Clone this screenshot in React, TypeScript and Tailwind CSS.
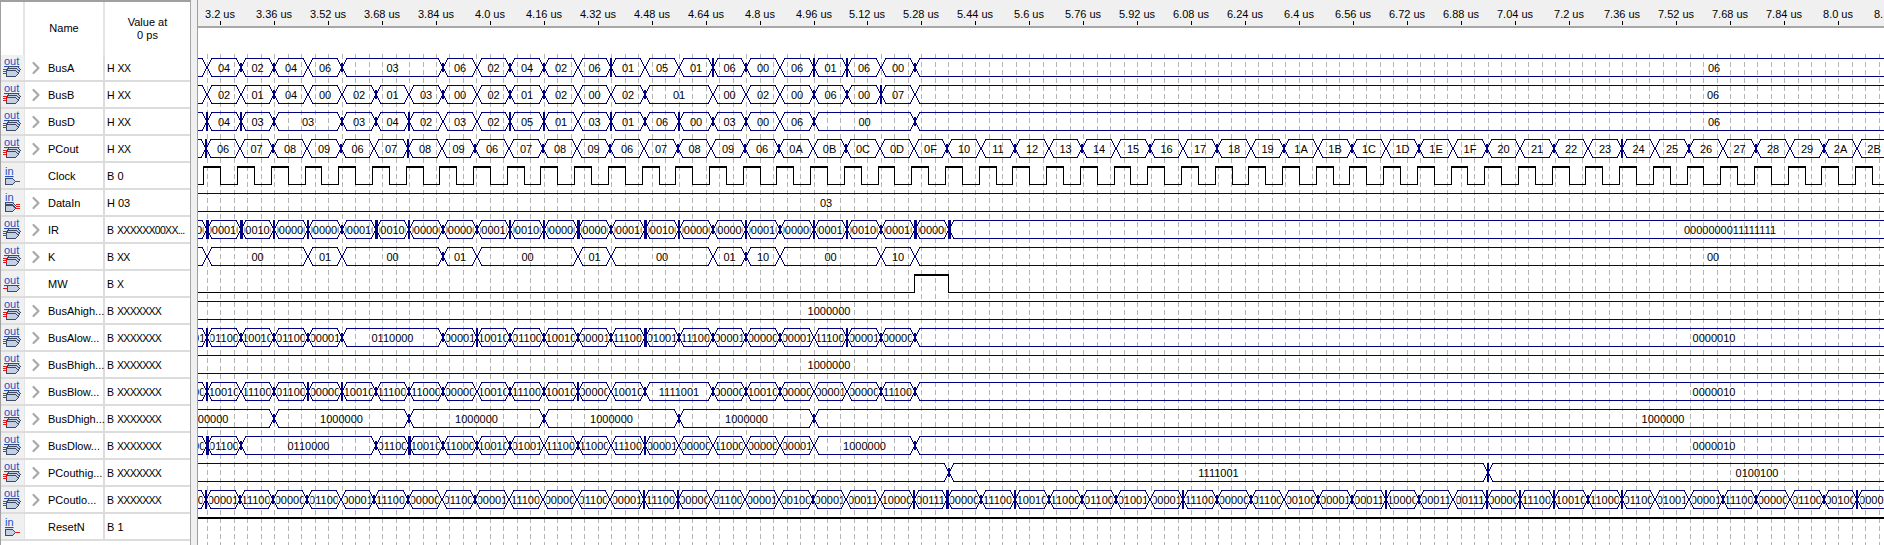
import React from "react";
import { ChevronRight } from "lucide-react";

const FONT = '"Liberation Sans", Arial, sans-serif';
const NAVY = "#000080";

// px per slot and where slot 0 begins (a slot is one clock period, 100 ns)
const SLOT = 33.708;
const SLOT0 = 206.3;
const LAST_SLOT = 60;
const TICK0 = 220.3;
const TICK = 53.93;

const SEVEN: Record<string, string> = {
  "0": "1000000",
  "1": "1111001",
  "2": "0100100",
  "3": "0110000",
  "4": "0011001",
  "5": "0010010",
  "6": "0000010",
  "7": "1111000",
  "8": "0000000",
  "9": "0011000",
  A: "0001000",
  B: "0000011",
  C: "1000110",
  D: "0100001",
  E: "0000110",
  F: "0001110",
};

type Seg = { from: number; to: number; text: string };

// tokens are one per slot, "." carries on the value before it
const parse = (tokens: string, start = -1): Seg[] => {
  const segs: Seg[] = [];
  tokens.split(" ").forEach((t, i) => {
    if (t === ".") return;
    if (segs.length) segs[segs.length - 1].to = start + i;
    segs.push({ from: start + i, to: LAST_SLOT, text: t });
  });
  return segs;
};

// the 7 segment rows follow the low nibble of their bus, equal values merge
const sevenSeg = (tokens: string): Seg[] => {
  const segs: Seg[] = [];
  let value = "";
  tokens.split(" ").forEach((t, i) => {
    const v = t === "." ? value : SEVEN[t[1]];
    value = v;
    const last = segs[segs.length - 1];
    if (last && last.text === v) return;
    if (last) last.to = i - 1;
    segs.push({ from: i - 1, to: LAST_SLOT, text: v });
  });
  return segs;
};

const ir = (s: string) => "000000" + s + "000000";

const BUS_A = "06 04 02 04 06 03 . . 06 02 04 02 06 01 05 01 06 00 06 01 06 00 06";
const BUS_B = "00 02 01 04 00 02 01 03 00 02 01 02 00 02 01 . 00 02 00 06 00 07 06";
const BUS_D = "00 04 03 03 . 03 04 02 03 02 05 01 03 01 06 00 03 00 06 00 . . 06";
const hexCount = Array.from({ length: 29 }, (_, i) => (i + 16).toString(16).toUpperCase()).join(" ");
const PC = "09 06 07 08 09 06 07 08 09 06 07 08 09 06 07 08 09 06 0A 0B 0C 0D 0F " + hexCount;

const IR_TOKENS = [
  "0000", "0001", "0010", "0000", "0000", "0001", "0010", "0000", "0000", "0001", "0010", "0000", "0000",
  "0001", "0010", "0000", "0000", "0001", "0000", "0001", "0010", "0001", "0000",
].map(ir).join(" ") + " 0000000011111111";

type Wave = {
  segs: Seg[];
  glitch?: string;
  offset?: number;
  tail?: number;
};

type Row = {
  name: string;
  value: string;
  icon: "outBus" | "outBit" | "inBit" | "inBus";
  wave?: Wave;
  bit?: "clock" | "mw" | "high";
};

const ROWS: Row[] = [
  { name: "BusA", value: "H XX", icon: "outBus", wave: { segs: parse(BUS_A), glitch: ".oo.o..o.oo.I..Io.II.o", tail: 1714 } },
  { name: "BusB", value: "H XX", icon: "outBus", wave: { segs: parse(BUS_B), glitch: "..o..o.o.oo..o....ooI.", tail: 1713 } },
  { name: "BusD", value: "H XX", icon: "outBus", wave: { segs: parse(BUS_D), glitch: "IIo.ooI..II.IoIoo.o..o", tail: 1714 } },
  {
    name: "PCout",
    value: "H XX",
    icon: "outBus",
    wave: { segs: parse(PC), offset: -0.5, glitch: "I.o.o.I.o.o.o.o.oo.o..o.o.o.o.o.o.o.o.o.o.I.o.o.o." },
  },
  { name: "Clock", value: "B 0", icon: "inBit", bit: "clock" },
  { name: "DataIn", value: "H 03", icon: "inBus", wave: { segs: parse("03"), tail: 826 } },
  { name: "IR", value: "B XXXXXX00XX...", icon: "outBus", wave: { segs: parse(IR_TOKENS), glitch: "HHIIoHIooIIHoHIoIoIIoHH", tail: 1730 } },
  {
    name: "K",
    value: "B XX",
    icon: "outBus",
    wave: { segs: parse("10 00 . . 01 00 . . 01 00 . . 01 00 . . 01 10 00 . . 10 00"), glitch: ".......o........o", tail: 1713 },
  },
  { name: "MW", value: "B X", icon: "outBit", bit: "mw" },
  { name: "BusAhigh...", value: "B XXXXXXX", icon: "outBus", wave: { segs: parse("1000000"), tail: 829 } },
  { name: "BusAlow...", value: "B XXXXXXX", icon: "outBus", wave: { segs: sevenSeg(BUS_A), glitch: "Ioooo..oIooooHoooo.Ioo", tail: 1714 } },
  { name: "BusBhigh...", value: "B XXXXXXX", icon: "outBus", wave: { segs: parse("1000000"), tail: 829 } },
  { name: "BusBlow...", value: "B XXXXXXX", icon: "outBus", wave: { segs: sevenSeg(BUS_B), glitch: "I.oIIooo.ooI.o.ooo..oo", tail: 1714 } },
  {
    name: "BusDhigh...",
    value: "B XXXXXXX",
    icon: "outBus",
    wave: { segs: parse("1000000 . . . 1000000 . . . 1000000 . . . 1000000 . . . 1000000 . . . 1000000", -2), glitch: "..o...o...o...o...o", tail: 1663 },
  },
  { name: "BusDlow...", value: "B XXXXXXX", icon: "outBus", wave: { segs: sevenSeg(BUS_D), glitch: "Ho...oHooo.o.I.......o", tail: 1714 } },
  {
    name: "PCouthig...",
    value: "B XXXXXXX",
    icon: "outBus",
    wave: {
      segs: [
        { from: -1, to: 22, text: "" },
        { from: 22, to: 38, text: "1111001" },
        { from: 38, to: LAST_SLOT, text: "0100100" },
      ],
      glitch: "......................o...............I",
      tail: 1757,
    },
  },
  {
    name: "PCoutlo...",
    value: "B XXXXXXX",
    icon: "outBus",
    wave: { segs: sevenSeg(PC), offset: -0.5, glitch: "Iooo.oo.o....II...o..IHoIooo.Ioo.ooIo.IIIoI..oo.oI" },
  },
  { name: "ResetN", value: "B 1", icon: "inBit", bit: "high" },
];

const tickLabel = (i: number) => {
  const t = (320 + i * 16) / 100;
  const s = t.toFixed(2).replace(/0$/, "");
  return s + " us";
};

const PIN_FILL = "#c4d0e4";
const PIN_LINE = "#3c4a68";
const RED = "#e01818";

const PinIcon = ({ icon }: { icon: Row["icon"] }) => {
  const label = (x: number, y: number, text: string) => (
    <text x={x} y={y} fontSize="11" fill="#1c50c4" textDecoration="underline" style={{ fontFamily: FONT }}>
      {text}
    </text>
  );
  const pin = (x: number, y: number, w: number, key?: number) => (
    <path key={key} d={`M${x + 0.5} ${y + 0.5}h${w}l3 3l-3 3h-${w}z`} fill={PIN_FILL} stroke={PIN_LINE} />
  );
  const wires = (x: number) =>
    [14, 16, 18].map((y) => <rect key={y} x={x} y={y} width="4" height="1" fill={RED} />);

  return (
    <svg className="block" width="24" height="25" viewBox="0 0 24 25" shapeRendering="crispEdges">
      {icon === "outBus" && (
        <g>
          {label(3, 10, "out")}
          {pin(7, 11, 9, 0)}
          {pin(6, 13, 9, 1)}
          {pin(5, 15, 9, 2)}
          {wires(2)}
        </g>
      )}
      {icon === "outBit" && (
        <g>
          {label(3, 13, "out")}
          {pin(6, 14, 9)}
          <rect x="2" y="17" width="5" height="1" fill={RED} />
        </g>
      )}
      {icon === "inBit" && (
        <g>
          {label(4, 12, "in")}
          {pin(4, 15, 7)}
          <rect x="14" y="18" width="5" height="1" fill={RED} />
        </g>
      )}
      {icon === "inBus" && (
        <g>
          {label(4, 11, "in")}
          {pin(4, 12, 7, 0)}
          {pin(4, 14, 7, 1)}
          {pin(4, 15, 7, 2)}
          {wires(15)}
        </g>
      )}
    </svg>
  );
};

const BitWave = ({ kind, top }: { kind: Row["bit"]; top: number }) => {
  if (kind === "high") {
    return <rect x="198" y={top} width="1686" height="2" fill="#000" />;
  }
  if (kind === "mw") {
    return (
      <g shapeRendering="crispEdges">
        <path d={`M198 ${top + 18.5}H914.5V${top + 0.5}H948.5V${top + 18.5}H1884`} fill="none" stroke="#000" />
        <rect x="914" y={top} width="35" height="2" fill="#000" />
      </g>
    );
  }
  const highs: React.ReactNode[] = [];
  let d = `M198 ${top + 18.5}`;
  for (let i = 0; i < 50; i++) {
    const rise = Math.round(203.4 + i * SLOT);
    const fall = Math.round(203.4 + i * SLOT + 16.9);
    d += `H${rise + 0.5}V${top + 0.5}H${fall + 0.5}V${top + 18.5}`;
    highs.push(<rect key={i} x={rise} y={top} width={fall - rise + 1} height="2" fill="#000" />);
  }
  return (
    <g shapeRendering="crispEdges">
      <path d={d + "H1884"} fill="none" stroke="#000" />
      {highs}
    </g>
  );
};

const BusWave = ({ wave, top }: { wave: Wave; top: number }) => {
  const offset = wave.offset ?? 0.7;
  const bottom = top + 18;
  const xOf = (k: number) => Math.round(SLOT0 + offset + k * SLOT);
  return (
    <g>
      {wave.segs.map((s, i) => {
        const x0 = xOf(s.from);
        const x1 = Math.min(xOf(s.to), 2300);
        const open = s.to >= LAST_SLOT;
        const cx = open && wave.tail ? wave.tail : (x0 + x1) / 2;
        const mark = wave.glitch?.[s.from];
        return (
          <g key={i}>
            <path
              d={`M${x0 + 5} ${top + 0.5}H${x1 - 5}M${x0 + 5} ${bottom + 0.5}H${x1 - 5}`}
              stroke={NAVY}
              shapeRendering="crispEdges"
            />
            <path
              d={`M${x0 - 5} ${top + 0.5}L${x0 + 5} ${bottom + 0.5}M${x0 - 5} ${bottom + 0.5}L${x0 + 5} ${top + 0.5}`}
              stroke={NAVY}
              fill="none"
              shapeRendering="crispEdges"
            />
            {mark === "o" && <rect x={x0 - 1} y={top + 5} width="2" height="9" fill={NAVY} />}
            {mark === "I" && <rect x={x0 - 1} y={top} width="2" height="19" fill={NAVY} />}
            {mark === "H" && <rect x={x0 - 1} y={top} width="3" height="19" fill={NAVY} />}
            {s.text && (
              <svg x={x0 + 3.5} y={top} width={Math.max(x1 - x0 - 7, 0)} height="19">
                <text x={cx - x0 - 3.5} y="14" textAnchor="middle" fontSize="11" fill="#000" style={{ fontFamily: FONT }}>
                  {s.text}
                </text>
              </svg>
            )}
          </g>
        );
      })}
    </g>
  );
};

const WaveArea = () => {
  const grid: number[] = [];
  for (let i = 0; i < 127; i++) grid.push(Math.round(206.8 + i * (TICK / 4)) + 0.5);
  return (
    <svg className="block" width="1686" height="517" viewBox="198 28 1686 517">
      {grid.map((x) => (
        <line key={x} x1={x} x2={x} y1="54" y2="545" stroke="#b4b4b4" strokeDasharray="5 3" shapeRendering="crispEdges" />
      ))}
      {ROWS.map((r, i) => {
        const top = 58 + i * 27;
        return r.wave ? <BusWave key={r.name} wave={r.wave} top={top} /> : <BitWave key={r.name} kind={r.bit} top={r.bit === "clock" ? 166 : r.bit === "high" ? 517 : 274} />;
      })}
    </svg>
  );
};

const Ruler = () => (
  <svg className="block" width="1686" height="27" viewBox="198 0 1686 27">
    {Array.from({ length: 32 }, (_, i) => {
      const x = Math.round(TICK0 + i * TICK);
      return (
        <g key={i}>
          <text x={x} y="18" textAnchor="middle" fontSize="11" fill="#000" style={{ fontFamily: FONT }}>
            {tickLabel(i)}
          </text>
          <rect x={x} y="21" width="1" height="4" fill="#000" />
        </g>
      );
    })}
  </svg>
);

const App: React.FC = () => {
  return (
    <div
      className="flex w-[1884px] h-[545px] overflow-hidden bg-white text-[11px] leading-[13px] text-black"
      style={{ fontFamily: FONT }}
    >
      {/* signal table */}
      <div className="w-[191px] shrink-0 border-l border-t-2 border-r border-[#a0a0a0] border-r-[#a8a8a8]">
        <div className="flex h-[53px]">
          <div className="w-[24px] border-r-2 border-[#e4e4e4]" />
          <div className="w-[80px] border-r-2 border-[#e4e4e4] flex items-center justify-center">Name</div>
          <div className="flex-1 flex items-center justify-center text-center">
            Value at
            <br />0 ps
          </div>
        </div>
        {ROWS.map((r) => (
          <div key={r.name} className="flex h-[27px] border-b-2 border-[#dcdcdc]">
            <div className="w-[24px] shrink-0 bg-[#f0f0f0] border-r border-[#e4e4e4]">
              <PinIcon icon={r.icon} />
            </div>
            <div className="w-[80px] shrink-0 flex items-center pt-[2px] border-l border-r-2 border-[#dcdcdc] border-l-white">
              <div className="w-[20px] shrink-0 flex justify-end">
                {r.wave && <ChevronRight size={20} strokeWidth={2.6} className="text-[#a8a8a8] -mt-[2px]" />}
              </div>
              <span className="ml-[2px] whitespace-nowrap">{r.name}</span>
            </div>
            <div
              className={
                r.value.includes("X")
                  ? "flex-1 flex items-center pt-[2px] pl-[2px] whitespace-pre text-[10.5px] tracking-[-0.7px] [word-spacing:1.5px]"
                  : "flex-1 flex items-center pt-[2px] pl-[2px] whitespace-pre"
              }
            >
              {r.value}
            </div>
          </div>
        ))}
      </div>

      {/* splitter */}
      <div className="w-[7px] shrink-0 bg-[#f0f0f0] border-r border-[#a0a0a0]" />

      {/* waveform */}
      <div className="flex-1 min-w-0 border-t-2 border-[#a0a0a0]">
        <div className="h-[26px] bg-[#f0f0f0] overflow-hidden -mt-[2px]">
          <Ruler />
        </div>
        <div className="h-[2px] bg-[#a8a8a8]" />
        <WaveArea />
      </div>
    </div>
  );
};

export default App;
